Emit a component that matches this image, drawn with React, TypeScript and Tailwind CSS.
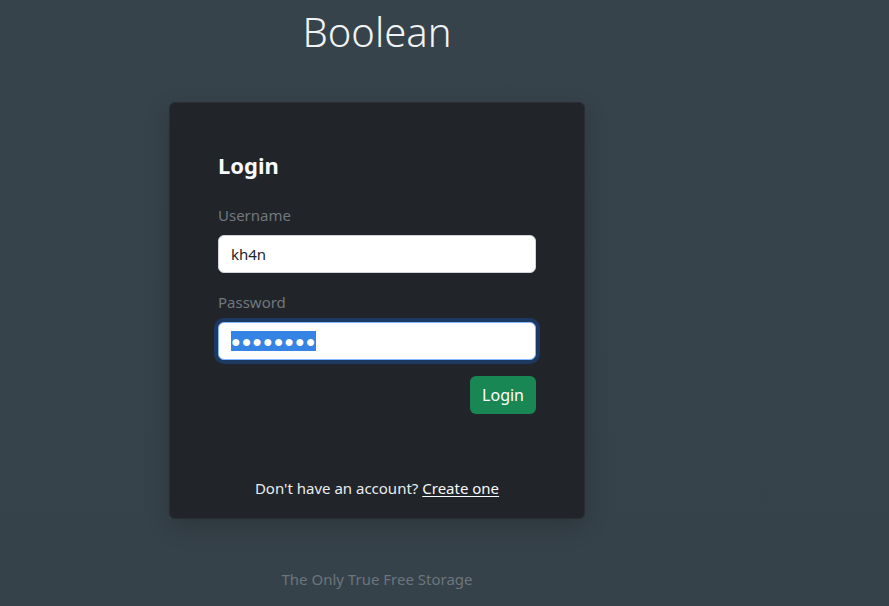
const App = () => {
  return (
    <div
      className="flex min-h-[606px] w-full flex-col bg-[linear-gradient(180deg,#37434b_0%,#36424a_100%)]"
      style={{ fontFamily: "'Noto Sans', 'Open Sans', sans-serif" }}
    >
      <div className="flex w-[754px] flex-col items-center pl-[169px] pr-[169px]">
        <h1 className="mt-[8px] text-[40px] font-light leading-[48px] text-[#f1f3f4]">
          Boolean
        </h1>
        <div className="mt-[46px] flex h-[417px] w-[416px] flex-col rounded-[6px] border border-[#2a2e33] bg-[#212529] px-[48px] pt-[46px] pb-[18px] shadow-[0_8px_24px_rgba(0,0,0,0.2)]">
          <h2 className="text-[22px] leading-[32px] font-bold text-[#f8f9fa]">
            Login
          </h2>
          <label className="mt-[22px] text-[15px] leading-[24px] text-[#70777e]">
            Username
          </label>
          <div className="mt-[8px] flex h-[38px] items-center rounded-[6px] border border-[#ced4da] bg-white px-[12px] text-[15px] text-[#212529]">
            kh4n
          </div>
          <label className="mt-[17px] text-[15px] leading-[24px] text-[#70777e]">
            Password
          </label>
          <div className="mt-[8px] flex h-[38px] items-center rounded-[6px] border border-[#86b7fe] bg-white px-[12px] shadow-[0_0_0_4px_#1d3961]">
            <span className="bg-[#3584e4] text-[16px] leading-[20px] tracking-[1px] text-white">
              ●●●●●●●●
            </span>
          </div>
          <div className="mt-[16px] flex justify-end">
            <button className="h-[38px] rounded-[6px] bg-[#198754] px-[12px] text-[16px] text-white">
              Login
            </button>
          </div>
          <div className="flex-1" />
          <p className="text-center text-[15px] leading-[24px] text-[#e9ecef]">
            Don't have an account?{" "}
            <a className="text-[#f8f9fa] underline underline-offset-2">Create one</a>
          </p>
        </div>
        <p className="mt-[48px] text-[15px] leading-[24px] text-[#6c757d]">
          The Only True Free Storage
        </p>
      </div>
    </div>
  );
};

export default App;
